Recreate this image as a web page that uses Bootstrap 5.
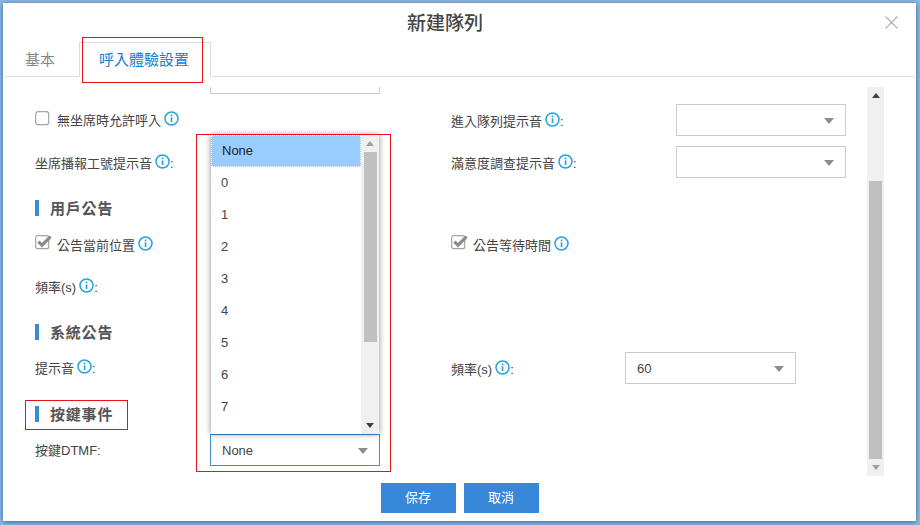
<!DOCTYPE html>
<html lang="zh-Hant">

<head>
    <meta charset="UTF-8" />
    <meta name="viewport" content="width=device-width, initial-scale=1.0" />
    <title>新建隊列</title>
    <link href="https://cdn.jsdelivr.net/npm/bootstrap@5.3.0/dist/css/bootstrap.min.css" rel="stylesheet" />
    <style>
        body {
            background-color: #8fb8e0;
            font-family: "Liberation Sans", "Noto Sans CJK TC", sans-serif;
            font-size: 13px;
            color: #444;
            height: 525px;
            padding: 3px 4px 4px 3px;
            overflow: hidden;
        }

        .dialog-box {
            height: 518px;
            background: #fff;
            box-shadow: 0 1px 5px rgba(20, 70, 130, .75);
        }

        .dialog-head {
            height: 39px;
        }

        .dialog-title {
            font-size: 19px;
            line-height: 39px;
            font-weight: 500;
            color: #444;
            padding: 1px 0 0 2px;
        }

        .close-x {
            width: 13px;
            height: 13px;
            margin: 13px 18px 0 0;
            line-height: 0;
        }

        .tab-strip {
            margin: 0 2px;
            border-bottom: 1px solid #ddd;
            font-size: 15px;
        }

        .tab-strip .nav-link {
            height: 35px;
            line-height: 34px;
            padding: 0 21px 0 19px;
            margin: 0 2px -1px 0;
            color: #888;
            border: 1px solid transparent;
            border-radius: 0;
        }

        .tab-strip .nav-link.active {
            color: #0f7fd0;
            border-color: #ddd #ddd #fff;
        }

        .red-box {
            position: absolute;
            border: 1px solid #e8141c;
            pointer-events: none;
        }

        .tab-mark {
            left: 3px;
            top: -5px;
            width: 121px;
            height: 46px;
        }

        .form-pane {
            height: 389px;
            margin-top: 10px;
        }

        .form-scroll {
            width: 864px;
            padding-left: 32px;
        }

        .cut-select {
            width: 170px;
            height: 7px;
            margin-left: 175px;
            border: 1px solid #ccc;
            border-top: 0;
        }

        .line-wrap {
            height: 32px;
            margin-top: 10px;
        }

        .gap-12 {
            margin-top: 12px;
        }

        .col-half {
            width: 416px;
        }

        .lab-l {
            width: 175px;
        }

        .lab-r {
            width: 225px;
        }

        .lab-r-short {
            width: 174px;
        }

        .sink-1 {
            padding-top: 2px;
        }

        .pt-1 .info-i,
        .sink-1 .info-i {
            margin-top: -6px;
        }

        .pick {
            width: 170px;
            height: 32px;
            padding: 2px 24px 0 11px;
            font-size: 13px;
            color: #444;
            border: 1px solid #ccc;
            border-radius: 0;
            background-image: none;
            appearance: none;
        }

        .pick-wide {
            width: 171px;
        }

        .pick-on {
            border-color: #3a8fd8;
        }

        .pick-caret {
            position: relative;
        }

        .pick-caret::after {
            content: "";
            position: absolute;
            right: 12px;
            top: 14px;
            border: 5px solid transparent;
            border-bottom: 0;
            border-top: 6px solid #8c8c8c;
            pointer-events: none;
        }

        .info-i {
            width: 15px;
            height: 15px;
            margin: -4px 0 0 3px;
            flex: none;
        }

        .tick-box {
            width: 15px;
            height: 15px;
            margin: -3px 7px 0 0;
            flex: none;
        }

        .tick-on {
            width: 17px;
            margin-right: 5px;
        }

        .sec-head {
            height: 16px;
            margin-top: 22px;
            padding-left: 11px;
            font-size: 15px;
            font-weight: 700;
            line-height: 18px;
            letter-spacing: .8px;
            color: #555;
            border-left: 4px solid #3a8ad6;
            width: max-content;
        }

        .sec-head-mark {
            left: -14px;
            top: -6px;
            width: 103px;
            height: 30px;
        }

        .opt-panel {
            position: absolute;
            left: 1px;
            bottom: 32px;
            width: 168px;
            height: 299px;
            background: #fff;
            box-shadow: 0 0 6px rgba(0, 0, 0, .45);
            z-index: 5;
        }

        .opt-list {
            width: 150px;
        }

        .opt-item {
            height: 32px;
            line-height: 32px;
            padding: 0 0 0 10px;
            border: 1px solid transparent;
            border-radius: 0;
            color: #444;
            font-size: 13px;
            background: none;
        }

        .opt-item.sel {
            background: #99ccff;
            color: #222;
            border: 1px dotted #fff;
            line-height: 30px;
        }

        .opt-mark {
            left: -14px;
            top: -300px;
            width: 195px;
            height: 338px;
            z-index: 6;
        }

        .bar-track {
            width: 18px;
            background: #f0f0f0;
            flex: none;
        }

        .bar-end {
            height: 17px;
            flex: none;
        }

        .arrow-up,
        .arrow-down {
            width: 0;
            height: 0;
            border: 4px solid transparent;
        }

        .arrow-up {
            border-top: 0;
            border-bottom: 5px solid #404040;
        }

        .arrow-down {
            border-bottom: 0;
            border-top: 5px solid #a0a0a0;
        }

        .arrow-soft {
            border-bottom-color: #a0a0a0;
        }

        .arrow-dark {
            border-top-color: #404040;
        }

        .bar-thumb {
            width: 13px;
            background: #c0c0c0;
            flex: none;
        }

        .main-thumb {
            height: 278px;
            margin-top: 77px;
        }

        .opt-thumb {
            height: 190px;
        }

        .bar-fill {
            flex: 1;
        }

        .main-bar {
            width: 17px;
        }

        .foot-btn {
            width: 75px;
            height: 30px;
            padding: 0;
            font-size: 13px;
            border-radius: 0;
            background: #3788d8;
            border-color: #3788d8;
        }

        .dialog-foot {
            margin-top: 7px;
        }
    </style>
</head>

<body>
    <svg width="0" height="0" class="position-absolute">
        <symbol id="ico-info" viewBox="0 0 15 15">
            <circle cx="7.5" cy="7.5" r="6.5" fill="none" stroke="#25a5dc" stroke-width="1.5" />
            <rect x="6.7" y="6.4" width="1.7" height="4.6" fill="#25a5dc" />
            <rect x="6.7" y="3.6" width="1.7" height="1.7" fill="#25a5dc" />
        </symbol>
        <symbol id="ico-off" viewBox="0 0 15 15">
            <rect x=".7" y=".7" width="13" height="13" rx="2.5" fill="#fff" stroke="#a3a3ad" stroke-width="1.2" />
        </symbol>
        <symbol id="ico-on" viewBox="0 0 17 15">
            <rect x=".7" y=".7" width="13" height="13" rx="2" fill="#fff" stroke="#a3a3ad" stroke-width="1.2" />
            <path d="M3.4 6.6 7 10.2 15.6 1.6" fill="none" stroke="#8c8c8c" stroke-width="3.2" />
        </symbol>
    </svg>

    <div class="dialog-box d-flex flex-column">
        <div class="dialog-head d-flex">
            <div class="dialog-title flex-grow-1 text-center">新建隊列</div>
            <button type="button" class="close-x btn p-0 border-0" aria-label="Close">
                <svg width="13" height="13" viewBox="0 0 13 13">
                    <path d="M.5.5l12 12M12.5.5l-12 12" stroke="#b0b0b0" stroke-width="1.1" fill="none" />
                </svg>
            </button>
        </div>

        <ul class="nav nav-tabs tab-strip">
            <li class="nav-item"><a class="nav-link" href="#">基本</a></li>
            <li class="nav-item position-relative">
                <a class="nav-link active" href="#">呼入體驗設置</a>
                <span class="red-box tab-mark"></span>
            </li>
        </ul>

        <div class="form-pane d-flex">
            <div class="form-scroll">
                <div class="cut-select"></div>

                <div class="line-wrap d-flex">
                    <div class="col-half d-flex align-items-center">
                        <svg class="tick-box"><use href="#ico-off" /></svg>
                        <span class="d-flex align-items-center sink-1">無坐席時允許呼入<svg class="info-i"><use href="#ico-info" /></svg></span>
                    </div>
                    <div class="col-half d-flex align-items-center">
                        <div class="lab-r d-flex align-items-center pt-1">進入隊列提示音<svg class="info-i"><use href="#ico-info" /></svg>:</div>
                        <div class="pick-caret"><select class="form-select pick"><option></option></select></div>
                    </div>
                </div>

                <div class="line-wrap d-flex">
                    <div class="col-half d-flex align-items-center">
                        <div class="lab-l d-flex align-items-center pt-1">坐席播報工號提示音<svg class="info-i"><use href="#ico-info" /></svg>:</div>
                    </div>
                    <div class="col-half d-flex align-items-center">
                        <div class="lab-r d-flex align-items-center pt-1">滿意度調查提示音<svg class="info-i"><use href="#ico-info" /></svg>:</div>
                        <div class="pick-caret"><select class="form-select pick"><option></option></select></div>
                    </div>
                </div>

                <div class="sec-head">用戶公告</div>

                <div class="line-wrap gap-12 d-flex">
                    <div class="col-half d-flex align-items-center">
                        <svg class="tick-box tick-on" viewBox="0 0 17 15"><use href="#ico-on" /></svg>
                        <span class="d-flex align-items-center pt-1">公告當前位置<svg class="info-i"><use href="#ico-info" /></svg></span>
                    </div>
                    <div class="col-half d-flex align-items-center">
                        <svg class="tick-box tick-on" viewBox="0 0 17 15"><use href="#ico-on" /></svg>
                        <span class="d-flex align-items-center pt-1">公告等待時間<svg class="info-i"><use href="#ico-info" /></svg></span>
                    </div>
                </div>

                <div class="line-wrap d-flex align-items-center">
                    <div class="lab-l d-flex align-items-center pt-1">頻率(s)<svg class="info-i"><use href="#ico-info" /></svg>:</div>
                </div>

                <div class="sec-head">系統公告</div>

                <div class="line-wrap gap-12 d-flex">
                    <div class="col-half d-flex align-items-center">
                        <div class="lab-l d-flex align-items-center sink-1">提示音<svg class="info-i"><use href="#ico-info" /></svg>:</div>
                    </div>
                    <div class="col-half d-flex align-items-center">
                        <div class="lab-r-short d-flex align-items-center pt-1">頻率(s)<svg class="info-i"><use href="#ico-info" /></svg>:</div>
                        <div class="pick-caret"><select class="form-select pick pick-wide"><option>60</option></select></div>
                    </div>
                </div>

                <div class="sec-head position-relative">
                    按鍵事件
                    <span class="red-box sec-head-mark"></span>
                </div>

                <div class="line-wrap gap-12 d-flex align-items-center">
                    <div class="lab-l sink-1">按鍵DTMF:</div>
                    <div class="pick-caret">
                        <select class="form-select pick pick-on"><option>None</option></select>
                        <div class="opt-panel d-flex">
                            <div class="list-group list-group-flush opt-list">
                                <div class="list-group-item opt-item sel">None</div>
                                <div class="list-group-item opt-item">0</div>
                                <div class="list-group-item opt-item">1</div>
                                <div class="list-group-item opt-item">2</div>
                                <div class="list-group-item opt-item">3</div>
                                <div class="list-group-item opt-item">4</div>
                                <div class="list-group-item opt-item">5</div>
                                <div class="list-group-item opt-item">6</div>
                                <div class="list-group-item opt-item">7</div>
                            </div>
                            <div class="bar-track d-flex flex-column align-items-center">
                                <div class="bar-end d-flex align-items-center"><div class="arrow-up arrow-soft"></div></div>
                                <div class="bar-thumb opt-thumb"></div>
                                <div class="bar-fill"></div>
                                <div class="bar-end d-flex align-items-center"><div class="arrow-down arrow-dark"></div></div>
                            </div>
                        </div>
                        <span class="red-box opt-mark"></span>
                    </div>
                </div>
            </div>

            <div class="bar-track main-bar d-flex flex-column align-items-center">
                <div class="bar-end d-flex align-items-center"><div class="arrow-up"></div></div>
                <div class="bar-thumb main-thumb"></div>
                <div class="bar-end d-flex align-items-center"><div class="arrow-down"></div></div>
            </div>
        </div>

        <div class="dialog-foot d-flex justify-content-center gap-2">
            <button type="button" class="btn btn-primary foot-btn">保存</button>
            <button type="button" class="btn btn-primary foot-btn">取消</button>
        </div>
    </div>

    <script src="https://cdn.jsdelivr.net/npm/bootstrap@5.3.0/dist/js/bootstrap.bundle.min.js"></script>
</body>

</html>
